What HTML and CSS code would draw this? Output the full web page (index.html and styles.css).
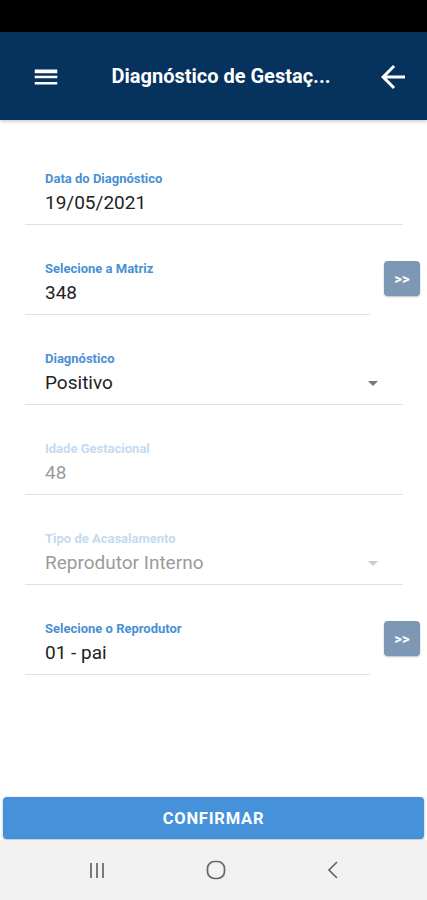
FILE: index.html
```html
<!DOCTYPE html>
<html lang="pt">
<head>
<title>Diagnóstico de Gestação</title>
<meta charset="UTF-8">
<meta name="viewport" content="width=device-width, initial-scale=1">
<link rel="stylesheet" href="styles.css">
</head>
<body>
<div class="statusbar"></div>
<header class="topbar">
 <svg class="menu-icon" viewBox="0 0 24 24" width="30" height="30">
  <path fill="#fff" d="M3 18h18v-2H3v2zm0-5h18v-2H3v2zm0-6v2h18V6H3z"/>
 </svg>
 <h1 class="title">Diagnóstico de Gestaç...</h1>
 <svg class="back-icon" viewBox="0 0 24 24" width="36" height="36">
  <path fill="#fff" d="M20 11H7.83l5.59-5.59L12 4l-8 8 8 8 1.41-1.41L7.83 13H20v-2z"/>
 </svg>
</header>

<main class="form">
 <div class="row">
  <div class="field">
   <label class="label">Data do Diagnóstico</label>
   <div class="value">19/05/2021</div>
  </div>
 </div>

 <div class="row">
  <div class="field short">
   <label class="label">Selecione a Matriz</label>
   <div class="value">348</div>
  </div>
  <button class="pick">&gt;&gt;</button>
 </div>

 <div class="row">
  <div class="field">
   <label class="label">Diagnóstico</label>
   <div class="value select">Positivo <span class="caret"></span></div>
  </div>
 </div>

 <div class="row">
  <div class="field disabled">
   <label class="label">Idade Gestacional</label>
   <div class="value">48</div>
  </div>
 </div>

 <div class="row">
  <div class="field disabled">
   <label class="label">Tipo de Acasalamento</label>
   <div class="value select">Reprodutor Interno <span class="caret"></span></div>
  </div>
 </div>

 <div class="row">
  <div class="field short">
   <label class="label">Selecione o Reprodutor</label>
   <div class="value">01 - pai</div>
  </div>
  <button class="pick">&gt;&gt;</button>
 </div>
</main>

<div class="actions">
 <button class="confirm">CONFIRMAR</button>
</div>

<nav class="navbar">
 <svg viewBox="0 0 18 18" width="18" height="18">
  <path stroke="#666" stroke-width="1.7" d="M3 2v15M9 2v15M15 2v15"/>
 </svg>
 <svg viewBox="0 0 20 20" width="20" height="20">
  <rect x="1.5" y="1.5" width="17" height="17" rx="7" fill="none"
        stroke="#666" stroke-width="1.7"/>
 </svg>
 <svg viewBox="0 0 14 20" width="14" height="20">
  <path fill="none" stroke="#666" stroke-width="1.7" d="M11 2L3 10l8 8"/>
 </svg>
</nav>
</body>
</html>
```

FILE: styles.css
```css
html { background: #fff; }
body { margin: 0; height: 900px; display: flex; flex-direction: column;
       font-family: Roboto, "Liberation Sans", sans-serif; color: #212121; }

.statusbar { height: 32px; background: #000; flex: none; }

.topbar { height: 88px; flex: none; display: flex; align-items: center;
          background: #06325e; padding: 0 16px 0 31px; box-sizing: border-box;
          box-shadow: 0 2px 3px rgba(0,0,0,0.18); position: relative; }
.menu-icon { display: block; margin-top: 2px; }
.back-icon { display: block; margin-top: 2px; }
.title { flex: 1; margin: 0; text-align: center; color: #fff;
         font-size: 20px; font-weight: 700; padding-left: 6px; }

.form { flex: 1; padding-top: 51px; }
.row { display: flex; align-items: flex-start; margin-bottom: 36px; }
.field { flex: 1; margin: 0 24px 0 25px; padding: 0 0 9px 20px;
         border-bottom: 1px solid #e2e2e2; }
.field.short { margin-right: 0; }
.label { display: block; font-size: 13px; line-height: 15px;
         font-weight: 700; color: #4a90d4; }
.value { margin-top: 5px; font-size: 19px; line-height: 24px; color: #222; }
.value.select { display: flex; justify-content: space-between;
                align-items: center; padding-right: 25px; }
.caret { width: 0; height: 0; border-left: 5px solid transparent;
         border-right: 5px solid transparent; border-top: 5px solid #777; }

.disabled .label { color: #c3dbf1; }
.disabled .value { color: #9b9b9b; }
.disabled .caret { border-top-color: #ccc; }

.pick { flex: none; width: 36px; height: 35px; margin: 0 7px 0 14px;
        border: 0; border-radius: 4px; background: #7d98b4; color: #fff;
        font: 700 15px Roboto, sans-serif; padding: 0;
        box-shadow: 0 1px 2px rgba(0,0,0,0.25); }

.actions { flex: none; padding: 0 3px 1px; }
.confirm { display: block; width: 100%; height: 42px; border: 0;
           border-radius: 4px; background: #4592db; color: #fff;
           font: 700 16.5px Roboto, sans-serif; letter-spacing: 0.8px;
           box-shadow: 0 1px 3px rgba(0,0,0,0.3); }

.navbar { height: 60px; flex: none; background: #f2f2f2; display: flex;
          align-items: center; justify-content: center; gap: 100px; }
```
